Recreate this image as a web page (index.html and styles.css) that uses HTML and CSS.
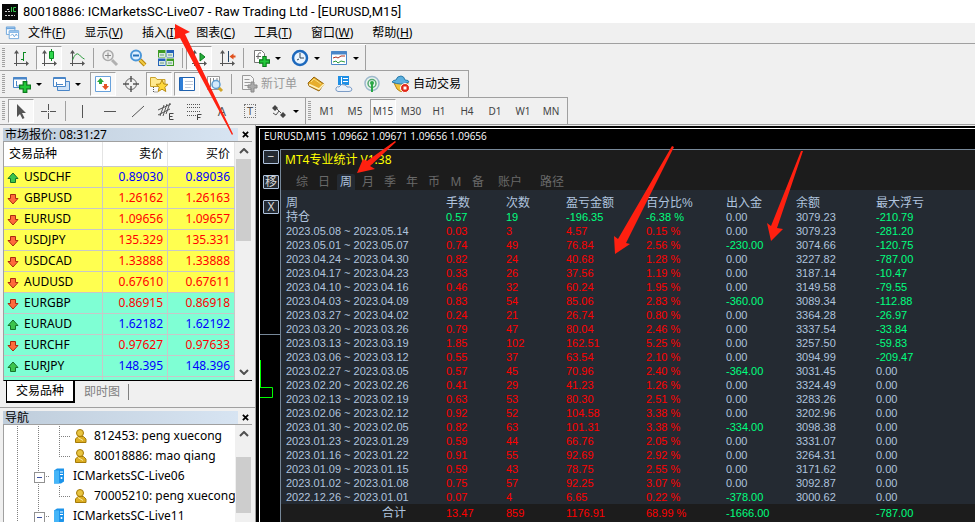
FILE: index.html
```html
<!DOCTYPE html>
<html lang="zh-CN">
<head>
<meta charset="utf-8">
<title>80018886: ICMarketsSC-Live07 - Raw Trading Ltd - [EURUSD,M15]</title>
<link rel="stylesheet" href="styles.css">
</head>
<body>
<svg class="defs" aria-hidden="true">
  <defs>
    <symbol id="caret" viewBox="0 0 8 8"><path d="M1 3h6L4 6z" fill="#000"/></symbol>
    <symbol id="up" viewBox="0 0 12 12"><path d="M6 1 11 6.500H8.500v4h-5v-4H1z" fill="#3cc44c" stroke="#16722a"/></symbol>
    <symbol id="down" viewBox="0 0 12 12"><path d="M6 11 1 5.500h2.500v-4h5v4H11z" fill="#ff6a3c" stroke="#a82a10"/></symbol>
    <symbol id="user" viewBox="0 0 14 16"><path d="M1.500 14.500V11L4 8.500h5.500l2.500 2.500v3.500z" fill="#dcae22" stroke="#a47a08"/><circle cx="6" cy="5" r="3.500" fill="#e9c440" stroke="#a47a08"/><path d="M4 9.500l5 3" stroke="#fbe9a0"/></symbol>
    <symbol id="server" viewBox="0 0 12 16"><path d="M1 2.500 4 .5h7v13l-3 2H1z" fill="#1c94ea"/><path d="M1 2.500h5v13H1z" fill="#45b5f8"/><path d="M7 4h3M7 6.500h3" stroke="#fff"/><circle cx="8.500" cy="10" r="1" fill="#fff"/></symbol>
    <symbol id="axes" viewBox="0 0 20 20"><path d="M5.500 4v14M3 15.500h13" stroke="#555" fill="none"/><path d="M5.500 2 8 5.500H3zM18 15.500l-3-2.500v5z" fill="#555"/></symbol>
    <symbol id="plus" viewBox="0 0 10 10"><path d="M3.500.5h3v3h3v3h-3v3h-3v-3h-3v-3h3z" fill="#22c93a" stroke="#0b7a1c"/></symbol>
  </defs>
</svg>

<header class="titlebar">
  <svg class="app-logo" viewBox="0 0 16 16" aria-hidden="true"><path d="M0 0h16v16H0z" fill="#080808"/><path d="M3 7.500h5M5 5.500h3M3 11.500h10" stroke="#ccc" fill="none" stroke-dasharray="2 1"/><path d="M9.500 3v5M14 3.500h-2.500v4H14" stroke="#35c84a" fill="none"/></svg>
  <h1>80018886: ICMarketsSC-Live07 - Raw Trading Ltd - [EURUSD,M15]</h1>
</header>

<nav class="menubar" aria-label="菜单">
  <svg class="doc-icon" viewBox="0 0 16 14" aria-hidden="true"><path d="M1.500.5h9v8h-9z" fill="#fff" stroke="#6ea6dc"/><path d="M1 2h10" stroke="#6ea6dc" stroke-width="2"/><path d="M4.500 4.500h10v8.500h-10z" fill="#fff" stroke="#6ea6dc"/><path d="M4 6h11" stroke="#8bbbe8" stroke-width="2"/><path d="M6 10l2-2 2 3 2-3 1 2" stroke="#6ea6dc" fill="none"/></svg>
  <a href="#">文件(<u>F</u>)</a><a href="#">显示(<u>V</u>)</a><a href="#">插入(<u>I</u>)</a><a href="#">图表(<u>C</u>)</a><a href="#">工具(<u>T</u>)</a><a href="#">窗口(<u>W</u>)</a><a href="#">帮助(<u>H</u>)</a>
</nav>

<section class="toolbars">
  <div class="bar-row">
    <div class="toolbar">
      <i class="grip"></i>
      <button aria-label="柱状图"><svg viewBox="0 0 20 20"><use href="#axes"/><path d="M12.500 4v9M10 11.500h2.500M12.500 4.500h2.500" stroke="#0a8a22" fill="none"/></svg></button>
      <button class="on" aria-label="阴阳烛"><svg viewBox="0 0 20 20"><use href="#axes"/><path d="M12.500 1v12" stroke="#0a8a22"/><path d="M10.500 3.500h4v7h-4z" fill="#2ed64c" stroke="#0a8a22"/></svg></button>
      <button aria-label="折线图"><svg viewBox="0 0 20 20"><use href="#axes"/><path d="M5.500 12Q9 3 12.500 7t5 4" stroke="#2a9a3c" fill="none"/></svg></button>
      <i class="sep"></i>
      <button aria-label="放大" disabled><svg viewBox="0 0 20 20"><path d="M12 12l5 5" stroke="#b0b0b0" stroke-width="3"/><circle cx="8" cy="7.500" r="5" fill="#eee" stroke="#aaa" stroke-width="1.500"/><path d="M5 7.500h6M8 4.500v6" stroke="#888"/></svg></button>
      <button aria-label="缩小"><svg viewBox="0 0 20 20"><path d="M12 12l5 5" stroke="#b8860b" stroke-width="4"/><path d="M12 12l5 5" stroke="#f2cc45" stroke-width="2"/><circle cx="8" cy="7.500" r="5" fill="#dff0ff" stroke="#4a96d8" stroke-width="2"/><path d="M5 7.500h6" stroke="#2470b8" stroke-width="2"/></svg></button>
      <button aria-label="平铺"><svg viewBox="0 0 20 20"><path d="M2 2h8v8H2zM10 10h8v8h-8z" fill="#3d9b25"/><path d="M10 2h8v8h-8zM2 10h8v8H2z" fill="#2462b8"/><path d="M3 5h6v4H3zM11 5h6v4h-6zM3 13h6v4H3zM11 13h6v4h-6z" fill="#d9eadf"/><path d="M4 7h4M12 7h4M4 15h4M12 15h4" stroke="#6a9a8a"/><path d="M10 2v16M2 10h16" stroke="#f4f4f4"/></svg></button>
      <i class="sep"></i>
      <button class="on" aria-label="自动滚动"><svg viewBox="0 0 20 20"><use href="#axes"/><path d="M11 5l5 4-5 4z" fill="#27ae3b" stroke="#0a7a1c"/></svg></button>
      <button aria-label="图表平移"><svg viewBox="0 0 20 20"><use href="#axes"/><path d="M11.500 3v11" stroke="#246"/><path d="M12.500 8.500l4-3v2h2v2h-2v2z" fill="#e0501c"/></svg></button>
      <i class="sep"></i>
      <button class="drop" aria-label="指标"><svg viewBox="0 0 20 20"><path d="M3.500 2.500h7l3 3v9h-10z" fill="#fff" stroke="#777"/><path d="M5 8.500h5M10 5q-3-1-3 3v3" stroke="#666" fill="none"/><use href="#plus" x="8" y="8" width="11" height="11"/></svg><svg class="caret"><use href="#caret"/></svg></button>
      <button class="drop" aria-label="周期"><svg viewBox="0 0 20 20"><circle cx="10" cy="10" r="7" fill="#eaf5ff" stroke="#1d69bd" stroke-width="2.500"/><path d="M10 5v5h4M7 12l2-1" stroke="#345" fill="none"/></svg><svg class="caret"><use href="#caret"/></svg></button>
      <button class="drop" aria-label="模板"><svg viewBox="0 0 20 20"><path d="M2.500 3.500h15v13h-15z" fill="#fff" stroke="#4a86c8"/><path d="M2 5h16" stroke="#4a86c8" stroke-width="3"/><path d="M4 10l3-1 2 1 3-2 4 0" stroke="#b03020" fill="none"/><path d="M4 14l3-1 2 2 3-2 4 1" stroke="#2a9a3c" fill="none"/></svg><svg class="caret"><use href="#caret"/></svg></button>
    </div>
  </div>
  <div class="bar-row">
    <div class="toolbar">
      <i class="grip"></i>
      <button class="drop" aria-label="新图表"><svg viewBox="0 0 20 20"><path d="M1.500 3.500h13v10h-13z" fill="#fff" stroke="#4a86c8"/><path d="M1 4.500h14" stroke="#4a86c8" stroke-width="2"/><path d="M4.500 7v5h5" stroke="#4a86c8" fill="none"/><use href="#plus" x="7" y="7" width="12" height="12"/></svg><svg class="caret"><use href="#caret"/></svg></button>
      <button class="drop" aria-label="配置文件"><svg viewBox="0 0 20 20"><path d="M6.500 7.500h12v9h-12z" fill="#cfe2f7" stroke="#4a86c8"/><path d="M2.500 3.500h12v9h-12z" fill="#fff" stroke="#4a86c8"/><path d="M2 4.500h13M5 10.500h7M5.500 8v4" stroke="#4a86c8"/></svg><svg class="caret"><use href="#caret"/></svg></button>
      <i class="space"></i>
      <button class="on" aria-label="市场报价"><svg viewBox="0 0 20 20"><path d="M2.500 2.500h15v15h-15z" fill="#fff" stroke="#69a2dc"/><path d="M7.500 4 11 8H9v2H6V8H4z" fill="#29a83a"/><path d="M12.500 16 9 12h2v-2h3v2h2z" fill="#e65324"/></svg></button>
      <button aria-label="数据窗口"><svg viewBox="0 0 20 20"><circle cx="10" cy="10" r="5.500" fill="none" stroke="#666"/><path d="M10 2v6M10 12v6M2 10h6M12 10h6" stroke="#555" stroke-width="1.500"/></svg></button>
      <button class="on" aria-label="导航"><svg viewBox="0 0 20 20"><path d="M1.500 3.500h5l1.500 2h8v7h-14.500z" fill="#ffe98f" stroke="#c9a22c"/><path d="M4.500 13v5h4" stroke="#555" stroke-dasharray="1 1" fill="none"/><path d="M13 6l1.800 4 4.200.4-3.200 2.800 1 4.300-3.800-2.300-3.800 2.300 1-4.300L7 10.400l4.200-.4z" fill="#ffd93b" stroke="#b98d12"/></svg></button>
      <button class="on" aria-label="终端"><svg viewBox="0 0 20 20"><path d="M2.500 3.500h15v13h-15z" fill="#fff" stroke="#1f61ae"/><path d="M4.500 4v12" stroke="#2e7dd6" stroke-width="3"/><path d="M8 7.500h8M8 10.500h8M8 13.500h6" stroke="#c3cbd8"/></svg></button>
      <button aria-label="策略测试"><svg viewBox="0 0 20 20"><path d="M2.500 2.500h12v13h-12z" fill="#fff" stroke="#999"/><path d="M5.500 4v9M8.500 4v5M12 4v3" stroke="#888"/><path d="M13 13l4 4" stroke="#d0a428" stroke-width="3"/><circle cx="11" cy="10.500" r="4" fill="#d4eafc" stroke="#5f9ed2" stroke-width="1.500"/></svg></button>
      <i class="sep"></i>
      <button class="labeled" disabled><svg viewBox="0 0 20 20"><path d="M3.500 1.500h8l3 3v11h-11z" fill="#f4f4f4" stroke="#999"/><path d="M5.500 5.500h5M5.500 8.500h6M5.500 11.500h4" stroke="#999"/><path d="M12 8h3v3h3v3h-3v4h-3v-4H9v-3h3z" fill="#aaa" stroke="#888"/></svg>新订单</button>
      <button aria-label="MetaEditor"><svg viewBox="0 0 20 20"><path d="M2 9l6-6 10 7-5 7L3 12z" fill="#e7ae2c" stroke="#96640e"/><path d="M3 10.500 13 15l5-5" stroke="#fff3bd" fill="none" stroke-width="1.500"/><path d="M5 8l3-3 7 5" stroke="#f7dc7c" fill="none"/></svg></button>
      <button aria-label="云服务"><svg viewBox="0 0 20 20"><path d="M4 2h11v9H4z" fill="#1e8fe6"/><path d="M7.500 3v7M9 4.500h5M9 7.500h5" stroke="#fff"/><path d="M4 17.500q-3-.5-2-3.500 1-2 3-1 2-4 6-2 2 1 2 2 4-1 5 2 0 2.500-3 2.500z" fill="#eaf1fa" stroke="#7c9cc6"/></svg></button>
      <button aria-label="信号"><svg viewBox="0 0 20 20"><circle cx="10" cy="9.500" r="7" fill="#e9f3ee" stroke="#9eb9cc" stroke-width="1.500"/><circle cx="10" cy="9.500" r="4" fill="none" stroke="#56a874" stroke-width="1.500"/><path d="M10 9v9" stroke="#29a745" stroke-width="2"/><circle cx="10" cy="9" r="2" fill="#29a745"/></svg></button>
      <button class="labeled"><svg viewBox="0 0 20 20"><path d="M3 9h14l-3 8q-5 2-8-2z" fill="#f2c53d" stroke="#b98212"/><path d="M1 8q1-2 4-2 1-4 5-4 3 0 4 4 4 0 4 2-8 4-17 0z" fill="#5cb0de" stroke="#2a7cac"/><circle cx="14" cy="14" r="4.500" fill="#e02818" stroke="#fff"/><path d="M12.500 12.500h3v3h-3z" fill="#fff"/></svg>自动交易</button>
    </div>
  </div>
  <div class="bar-row">
    <div class="toolbar">
      <i class="grip"></i>
      <button class="on" aria-label="光标"><svg viewBox="0 0 20 20"><path d="M6 3v13l3-3 2.500 5 2-1-2.500-5h4z" fill="#555"/></svg></button>
      <button aria-label="十字线"><svg viewBox="0 0 20 20"><path d="M9.500 3v6M9.500 12v6M2 10.500h6M11 10.500h6M9 10.500h1" stroke="#555"/></svg></button>
      <i class="sep"></i>
      <button aria-label="垂直线"><svg viewBox="0 0 20 20"><path d="M10.500 4v13" stroke="#555"/></svg></button>
      <button aria-label="水平线"><svg viewBox="0 0 20 20"><path d="M4 10.500h12" stroke="#555"/></svg></button>
      <button aria-label="趋势线"><svg viewBox="0 0 20 20"><path d="M4 16 16 5" stroke="#555"/></svg></button>
      <button aria-label="等距通道"><svg viewBox="0 0 20 20"><path d="M2 9l13-6M2 14l12-6M4 15 8 4M7 15l4-12M10 13l4-11" stroke="#555" fill="none"/><path d="M17.500 12.500h-4v6h4M13.500 15.500h3" stroke="#444" fill="none"/></svg></button>
      <button aria-label="斐波纳契"><svg viewBox="0 0 20 20"><path d="M3 3.500h14M3 6.500h14M3 10.500h14M3 14.500h9" stroke="#555" stroke-dasharray="1 1"/><path d="M17.500 13.500h-4v5.500M13.500 16.500h3" stroke="#444" fill="none"/></svg></button>
      <button class="glyph">A</button>
      <button class="glyph"><span class="text-label">T</span></button>
      <button class="drop" aria-label="箭头"><svg viewBox="0 0 20 20"><path d="M3 7l3-3 3 3-3 3zM11 14l3-3 3 3-3 3z" fill="#444"/><path d="M8 8l4 4M4 12l3 2 3-4" stroke="#555" fill="none"/></svg><svg class="caret"><use href="#caret"/></svg></button>
    </div>
    <div class="toolbar periods">
      <i class="grip"></i>
      <button>M1</button><button>M5</button><button class="on">M15</button><button>M30</button><button>H1</button><button>H4</button><button>D1</button><button>W1</button><button>MN</button>
    </div>
  </div>
</section>

<main class="workspace">
  <aside class="dock">
    <section class="pane">
      <header class="pane-head"><h2>市场报价: 08:31:27</h2><button aria-label="关闭"><svg viewBox="0 0 8 8"><path d="M1 1l6 6M7 1 1 7" stroke="#000" stroke-width="2"/></svg></button></header>
      <div class="pane-body quotes-body">
        <table class="quotes">
          <colgroup><col><col class="price"><col class="price last"></colgroup>
          <thead><tr><th>交易品种</th><th>卖价</th><th>买价</th></tr></thead>
          <tbody>
            <tr class="rise"><td><svg><use href="#up"/></svg>USDCHF</td><td>0.89030</td><td>0.89036</td></tr>
            <tr><td><svg><use href="#down"/></svg>GBPUSD</td><td>1.26162</td><td>1.26163</td></tr>
            <tr><td><svg><use href="#down"/></svg>EURUSD</td><td>1.09656</td><td>1.09657</td></tr>
            <tr><td><svg><use href="#down"/></svg>USDJPY</td><td>135.329</td><td>135.331</td></tr>
            <tr><td><svg><use href="#down"/></svg>USDCAD</td><td>1.33888</td><td>1.33888</td></tr>
            <tr><td><svg><use href="#down"/></svg>AUDUSD</td><td>0.67610</td><td>0.67611</td></tr>
          </tbody>
          <tbody class="cross">
            <tr><td><svg><use href="#down"/></svg>EURGBP</td><td>0.86915</td><td>0.86918</td></tr>
            <tr class="rise"><td><svg><use href="#up"/></svg>EURAUD</td><td>1.62182</td><td>1.62192</td></tr>
            <tr><td><svg><use href="#down"/></svg>EURCHF</td><td>0.97627</td><td>0.97633</td></tr>
            <tr class="rise"><td><svg><use href="#up"/></svg>EURJPY</td><td>148.395</td><td>148.396</td></tr>
            <tr><td></td><td></td><td></td></tr>
          </tbody>
        </table>
        <div class="scroll"><svg viewBox="0 0 10 6"><path d="M1 5l4-4 4 4"/></svg><i class="thumb"></i><svg class="end" viewBox="0 0 10 6"><path d="M1 1l4 4 4-4"/></svg></div>
      </div>
      <nav class="pane-tabs"><button class="active">交易品种</button><button>即时图</button></nav>
    </section>
    <section class="pane navigator">
      <header class="pane-head"><h2>导航</h2><button aria-label="关闭"><svg viewBox="0 0 8 8"><path d="M1 1l6 6M7 1 1 7" stroke="#000" stroke-width="2"/></svg></button></header>
      <div class="pane-body">
        <ul class="tree">
          <li><i class="guide"></i><i class="guide"></i><i class="guide branch"></i><svg class="user"><use href="#user"/></svg>812453: peng xuecong</li>
          <li><i class="guide"></i><i class="guide"></i><i class="guide branch half"></i><svg class="user"><use href="#user"/></svg>80018886: mao qiang</li>
          <li><i class="guide"></i><i class="guide branch open"></i><svg class="server"><use href="#server"/></svg>ICMarketsSC-Live06</li>
          <li><i class="guide"></i><i class="guide"></i><i class="guide branch half"></i><svg class="user"><use href="#user"/></svg>70005210: peng xuecong</li>
          <li><i class="guide"></i><i class="guide branch open"></i><svg class="server"><use href="#server"/></svg>ICMarketsSC-Live11</li>
        </ul>
        <div class="scroll"><svg viewBox="0 0 10 6"><path d="M1 5l4-4 4 4"/></svg><i class="thumb"></i></div>
      </div>
    </section>
  </aside>

  <section class="chart">
    <div class="quote-line">EURUSD,M15 &nbsp;1.09662 1.09671 1.09656 1.09656</div>
    <div class="chart-body">
      <div class="chart-side">
        <button>−</button><button>移</button><button>X</button>
        <svg class="candle" viewBox="0 0 20 66" aria-hidden="true"><path d="M0 .5h20" stroke="#778899"/><path d="M.5 26v27M0 53.500h12.500v10H0" stroke="#0f0" fill="none"/></svg>
      </div>
      <div class="stats">
        <header>
          <h2>MT4专业统计 V1.38</h2>
          <nav class="stat-tabs"><button>综</button><button>日</button><button class="active">周</button><button>月</button><button>季</button><button>年</button><button>币</button><button>M</button><button>备</button><button class="wide">账户</button><button class="wide">路径</button></nav>
        </header>
        <table class="report">
          <colgroup><col class="w160"><col class="w60"><col class="w60"><col class="w80"><col class="w80"><col class="w70"><col class="w80"><col></colgroup>
          <thead><tr><th>周</th><th>手数</th><th>次数</th><th>盈亏金额</th><th>百分比%</th><th>出入金</th><th>余额</th><th>最大浮亏</th></tr></thead>
          <tbody>
            <tr><td class="cjk">持仓</td><td class="g">0.57</td><td class="g">19</td><td class="g">-196.35</td><td class="g">-6.38 %</td><td>0.00</td><td>3079.23</td><td class="g">-210.79</td></tr>
            <tr><td>2023.05.08 ~ 2023.05.14</td><td>0.03</td><td>3</td><td>4.57</td><td>0.15 %</td><td>0.00</td><td>3079.23</td><td class="g">-281.20</td></tr>
            <tr><td>2023.05.01 ~ 2023.05.07</td><td>0.74</td><td>49</td><td>76.84</td><td>2.56 %</td><td class="g">-230.00</td><td>3074.66</td><td class="g">-120.75</td></tr>
            <tr><td>2023.04.24 ~ 2023.04.30</td><td>0.82</td><td>24</td><td>40.68</td><td>1.28 %</td><td>0.00</td><td>3227.82</td><td class="g">-787.00</td></tr>
            <tr><td>2023.04.17 ~ 2023.04.23</td><td>0.33</td><td>26</td><td>37.56</td><td>1.19 %</td><td>0.00</td><td>3187.14</td><td class="g">-10.47</td></tr>
            <tr><td>2023.04.10 ~ 2023.04.16</td><td>0.46</td><td>32</td><td>60.24</td><td>1.95 %</td><td>0.00</td><td>3149.58</td><td class="g">-79.55</td></tr>
            <tr><td>2023.04.03 ~ 2023.04.09</td><td>0.83</td><td>54</td><td>85.06</td><td>2.83 %</td><td class="g">-360.00</td><td>3089.34</td><td class="g">-112.88</td></tr>
            <tr><td>2023.03.27 ~ 2023.04.02</td><td>0.24</td><td>21</td><td>26.74</td><td>0.80 %</td><td>0.00</td><td>3364.28</td><td class="g">-26.97</td></tr>
            <tr><td>2023.03.20 ~ 2023.03.26</td><td>0.79</td><td>47</td><td>80.04</td><td>2.46 %</td><td>0.00</td><td>3337.54</td><td class="g">-33.84</td></tr>
            <tr><td>2023.03.13 ~ 2023.03.19</td><td>1.85</td><td>102</td><td>162.51</td><td>5.25 %</td><td>0.00</td><td>3257.50</td><td class="g">-59.83</td></tr>
            <tr><td>2023.03.06 ~ 2023.03.12</td><td>0.55</td><td>37</td><td>63.54</td><td>2.10 %</td><td>0.00</td><td>3094.99</td><td class="g">-209.47</td></tr>
            <tr><td>2023.02.27 ~ 2023.03.05</td><td>0.57</td><td>45</td><td>70.96</td><td>2.40 %</td><td class="g">-364.00</td><td>3031.45</td><td>0.00</td></tr>
            <tr><td>2023.02.20 ~ 2023.02.26</td><td>0.41</td><td>29</td><td>41.23</td><td>1.26 %</td><td>0.00</td><td>3324.49</td><td>0.00</td></tr>
            <tr><td>2023.02.13 ~ 2023.02.19</td><td>0.63</td><td>53</td><td>80.30</td><td>2.51 %</td><td>0.00</td><td>3283.26</td><td>0.00</td></tr>
            <tr><td>2023.02.06 ~ 2023.02.12</td><td>0.92</td><td>52</td><td>104.58</td><td>3.38 %</td><td>0.00</td><td>3202.96</td><td>0.00</td></tr>
            <tr><td>2023.01.30 ~ 2023.02.05</td><td>0.82</td><td>63</td><td>101.31</td><td>3.38 %</td><td class="g">-334.00</td><td>3098.38</td><td>0.00</td></tr>
            <tr><td>2023.01.23 ~ 2023.01.29</td><td>0.59</td><td>44</td><td>66.76</td><td>2.05 %</td><td>0.00</td><td>3331.07</td><td>0.00</td></tr>
            <tr><td>2023.01.16 ~ 2023.01.22</td><td>0.91</td><td>55</td><td>92.69</td><td>2.92 %</td><td>0.00</td><td>3264.31</td><td>0.00</td></tr>
            <tr><td>2023.01.09 ~ 2023.01.15</td><td>0.59</td><td>43</td><td>78.75</td><td>2.55 %</td><td>0.00</td><td>3171.62</td><td>0.00</td></tr>
            <tr><td>2023.01.02 ~ 2023.01.08</td><td>0.75</td><td>57</td><td>92.25</td><td>3.07 %</td><td>0.00</td><td>3092.87</td><td>0.00</td></tr>
            <tr><td>2022.12.26 ~ 2023.01.01</td><td>0.07</td><td>4</td><td>6.65</td><td>0.22 %</td><td class="g">-378.00</td><td>3000.62</td><td>0.00</td></tr>
          </tbody>
          <tfoot><tr><th>合计</th><td>13.47</td><td>859</td><td>1176.91</td><td>68.99 %</td><td class="g">-1666.00</td><td></td><td class="g">-787.00</td></tr></tfoot>
        </table>
      </div>
    </div>
  </section>
</main>

<svg class="annotations" width="975" height="522" aria-hidden="true">
  <path d="M175 24 190 32 185 34 233 134 232 135 180 38 175 39z"/>
  <path d="M395 141 396 142 370 166 375 169 357 173 363 159 367 161z"/>
  <path d="M672 146 674 147 626 243 630 244 615 254 614 236 618 239z"/>
  <path d="M801 151 803 151 777 228 783 229 771 241 767 223 771 226z"/>
</svg>
</body>
</html>
```
FILE: styles.css
```css
* { box-sizing: border-box; }

body {
  margin: 0;
  height: 100vh;
  display: flex;
  flex-direction: column;
  overflow: hidden;
  background: #f0f0f0;
  color: #000;
  font: 12px/16px "Noto Sans", "Noto Sans CJK SC", sans-serif;
}

h1, h2 { margin: 0; font: inherit; }
a { color: inherit; text-decoration: none; }
button { margin: 0; padding: 0; border: 0; background: none; color: inherit; font: inherit; }
svg { display: block; flex: none; }
.defs { position: absolute; width: 0; height: 0; }

.titlebar {
  flex: none;
  height: 23px;
  display: flex;
  align-items: center;
  gap: 5px;
  padding-left: 2px;
  background: #fff;
}
.titlebar h1 { font: 13px/16px Roboto, "Noto Sans", sans-serif; }
.app-logo { width: 16px; height: 16px; }

.menubar {
  flex: none;
  height: 21px;
  display: flex;
  align-items: center;
  gap: 19px;
  padding-left: 5px;
  border-bottom: 1px solid #a0a0a0;
}
.doc-icon { width: 15px; height: 14px; margin-right: -11px; }

.toolbars {
  flex: none;
  border-bottom: 1px solid #a0a0a0;
}
.bar-row {
  display: flex;
  width: fit-content;
  height: 27px;
  border-top: 1px solid #a0a0a0;
}
.bar-row:first-child { height: 26px; border-top: 1px solid #fff; }
.toolbar {
  display: flex;
  align-items: center;
  gap: 2px;
  padding: 0 3px 0 2px;
  border-right: 1px solid #a0a0a0;
}
.grip {
  width: 3px;
  height: 20px;
  margin-right: 1px;
  background: repeating-linear-gradient(#a0a0a0 0 1px, #f0f0f0 1px 2px);
}
.sep { width: 1px; height: 20px; margin: 0 1px; background: #a0a0a0; }
.space { width: 2px; }
.toolbar button {
  display: flex;
  align-items: center;
  justify-content: center;
  width: 26px;
  height: 24px;
}
.toolbar button svg { width: 20px; height: 20px; }
.toolbar .on {
  background: #f8f8f8;
  border: 1px solid #fff;
  border-top-color: #a0a0a0;
  border-left-color: #a0a0a0;
}
.toolbar .drop { width: 37px; justify-content: flex-start; gap: 3px; padding-left: 4px; }
.toolbar .drop .caret { width: 8px; height: 8px; }
.toolbar .labeled { width: auto; padding: 0 4px; gap: 2px; }
.toolbar .labeled:disabled { color: #999; }
.toolbar .glyph { color: #555; font-size: 13px; }
.text-label { width: 12px; border: 1px dotted #777; line-height: 12px; font-size: 11px; }
.periods button { color: #444; font-size: 10px; }

.workspace { flex: 1; display: flex; min-height: 0; }

.dock {
  flex: none;
  width: 256px;
  display: flex;
  flex-direction: column;
  border-right: 1px solid #a0a0a0;
}
.pane {
  flex: none;
  padding: 2px 3px 4px;
  border-bottom: 1px solid #a0a0a0;
}
.navigator { flex: 1; min-height: 0; display: flex; flex-direction: column; border: 0; padding-bottom: 0; }
.pane-head {
  display: flex;
  align-items: center;
  height: 14px;
  line-height: 13px;
}
.pane-head h2 {
  flex: 1;
  height: 13px;
  padding-left: 2px;
  background: linear-gradient(90deg, #bfcddb, #d7e4f2);
}
.pane-head button { width: 14px; display: grid; place-items: center; }
.pane-head svg { width: 7px; height: 7px; }
.pane-body {
  display: flex;
  overflow: hidden;
  background: #fff;
  border-top: 1px solid #a0a0a0;
  border-left: 1px solid #a0a0a0;
}
.quotes-body { height: 240px; border-bottom: 1px solid #000; }
.navigator .pane-body { flex: 1; }

.quotes { flex: 1; table-layout: fixed; border-collapse: separate; border-spacing: 0; height: fit-content; }
.price { width: 65px; }
.price.last { width: 67px; }
.quotes th, .quotes td {
  height: 21px;
  padding: 0 4px 0 5px;
  border-right: 1px solid #c8c8c8;
  border-bottom: 1px solid #c8c8c8;
  font-weight: 400;
  text-align: right;
}
.quotes th { height: 25px; background: #fff; border-right-color: #e4e4e4; }
.quotes th:first-child, .quotes td:first-child { text-align: left; }
.quotes tbody { background: #ffff50; }
.quotes .cross { background: #7fffd4; }
.quotes td { color: #f00; }
.quotes .rise td { color: #00f; }
.quotes tr td:first-child { color: #000; }
.quotes td svg { display: inline-block; width: 12px; height: 12px; margin: 0 5px 0 -2px; vertical-align: -3px; }

.scroll {
  flex: none;
  width: 17px;
  display: flex;
  flex-direction: column;
  align-items: center;
  padding-top: 6px;
  background: #f0f0f0;
}
.scroll svg { width: 10px; height: 6px; fill: none; stroke: #505050; stroke-width: 2; }
.scroll .end { margin: auto 0 5px; }
.thumb { width: 15px; height: 82px; margin-top: 5px; background: #cdcdcd; }
.navigator .thumb { height: 56px; margin-top: 20px; }

.pane-tabs { display: flex; padding: 0 3px; }
.pane-tabs button { height: 22px; padding: 0 9px; color: #808080; }
.pane-tabs .active {
  color: #000;
  background: #fff;
  border: solid #000;
  border-width: 0 2px 2px 1px;
}
.pane-tabs button:last-child { background: linear-gradient(#808080, #808080) right / 1px 16px no-repeat; }

.tree { flex: 1; min-width: 0; margin: 0; padding: 1px 0 0 13px; list-style: none; overflow: hidden; }
.tree li { display: flex; align-items: center; height: 20px; white-space: nowrap; }
.guide {
  flex: none;
  position: relative;
  width: 21px;
  height: 20px;
  background: repeating-linear-gradient(#808080 0 1px, transparent 1px 2px) left / 1px 100% no-repeat;
}
.branch {
  background:
    repeating-linear-gradient(#808080 0 1px, transparent 1px 2px) left / 1px 100% no-repeat,
    repeating-linear-gradient(90deg, #808080 0 1px, transparent 1px 2px) left center / 11px 1px no-repeat;
}
.half {
  background:
    repeating-linear-gradient(#808080 0 1px, transparent 1px 2px) left top / 1px 50% no-repeat,
    repeating-linear-gradient(90deg, #808080 0 1px, transparent 1px 2px) left center / 11px 1px no-repeat;
}
.branch { width: 15px; }
.open::before {
  content: "";
  position: absolute;
  left: -4px;
  top: 6px;
  width: 9px;
  height: 9px;
  border: 1px solid #919191;
  background: linear-gradient(#3c50a0, #3c50a0) center / 5px 1px no-repeat #fff;
}
.user { width: 14px; height: 16px; margin-right: 6px; }
.server { width: 12px; height: 16px; margin-right: 8px; }

.chart {
  flex: 1;
  min-width: 0;
  display: flex;
  flex-direction: column;
  margin-top: 1px;
  padding: 2px 0 0 3px;
  background: #000;
}
.quote-line {
  flex: none;
  height: 21px;
  padding-left: 4px;
  border: solid #fff;
  border-width: 1px 0 0 1px;
  color: #fff;
  font: 10px/15px "Open Sans", "Noto Sans", sans-serif;
}
.chart-body { flex: 1; display: flex; min-height: 0; border-left: 1px solid #fff; }
.chart-side { flex: none; width: 20px; padding: 1px 0 0 3px; }
.chart-side button {
  display: block;
  width: 16px;
  height: 14px;
  margin-bottom: 11px;
  border: 1px solid #b0c4de;
  border-radius: 1px;
  background: #242a32;
  color: #d8d8d8;
  line-height: 12px;
}
.candle { width: 20px; height: 66px; margin: 120px 0 0 -3px; }

.stats {
  flex: 1;
  min-width: 0;
  border: solid #778899;
  border-width: 1px 0 0 1px;
  background: #1c1c1c;
  color: #b0c4de;
}
.stats header { height: 40px; }
.stats h2 { padding: 2px 0 6px 4px; color: #ff0; }
.stat-tabs { display: flex; gap: 4px; padding-left: 12px; }
.stat-tabs button { width: 18px; height: 16px; color: #696969; line-height: 16px; }
.stat-tabs .wide { width: 38px; }
.stat-tabs .active { background: #242a32; color: #b0c4de; border-radius: 2px 2px 0 0; }

.report {
  width: 100%;
  table-layout: fixed;
  border-collapse: separate;
  border-spacing: 0;
  background: #242a32;
  font: 11px/14px "Liberation Sans", "Noto Sans CJK SC", sans-serif;
}
.w160 { width: 165px; }
.w80 { width: 80px; }
.w70 { width: 70px; }
.w60 { width: 60px; }
.report th, .report td { height: 14px; padding: 0; font-weight: 400; text-align: left; white-space: nowrap; }
.report th, .report .cjk { font-size: 12px; }
.report tr > :first-child { padding-left: 5px; }
.report thead th { height: 20px; padding-top: 6px; }
.report td:nth-child(n+2):nth-child(-n+5) { color: #f00; }
.report tr .g.g.g { color: #00ff7f; }
.report tfoot th, .report tfoot td { height: 18px; background: #1c1c1c; }
.report tfoot th { padding-right: 40px; text-align: right; }

.annotations { position: absolute; left: 0; top: 0; pointer-events: none; fill: #ff2010; }
```
